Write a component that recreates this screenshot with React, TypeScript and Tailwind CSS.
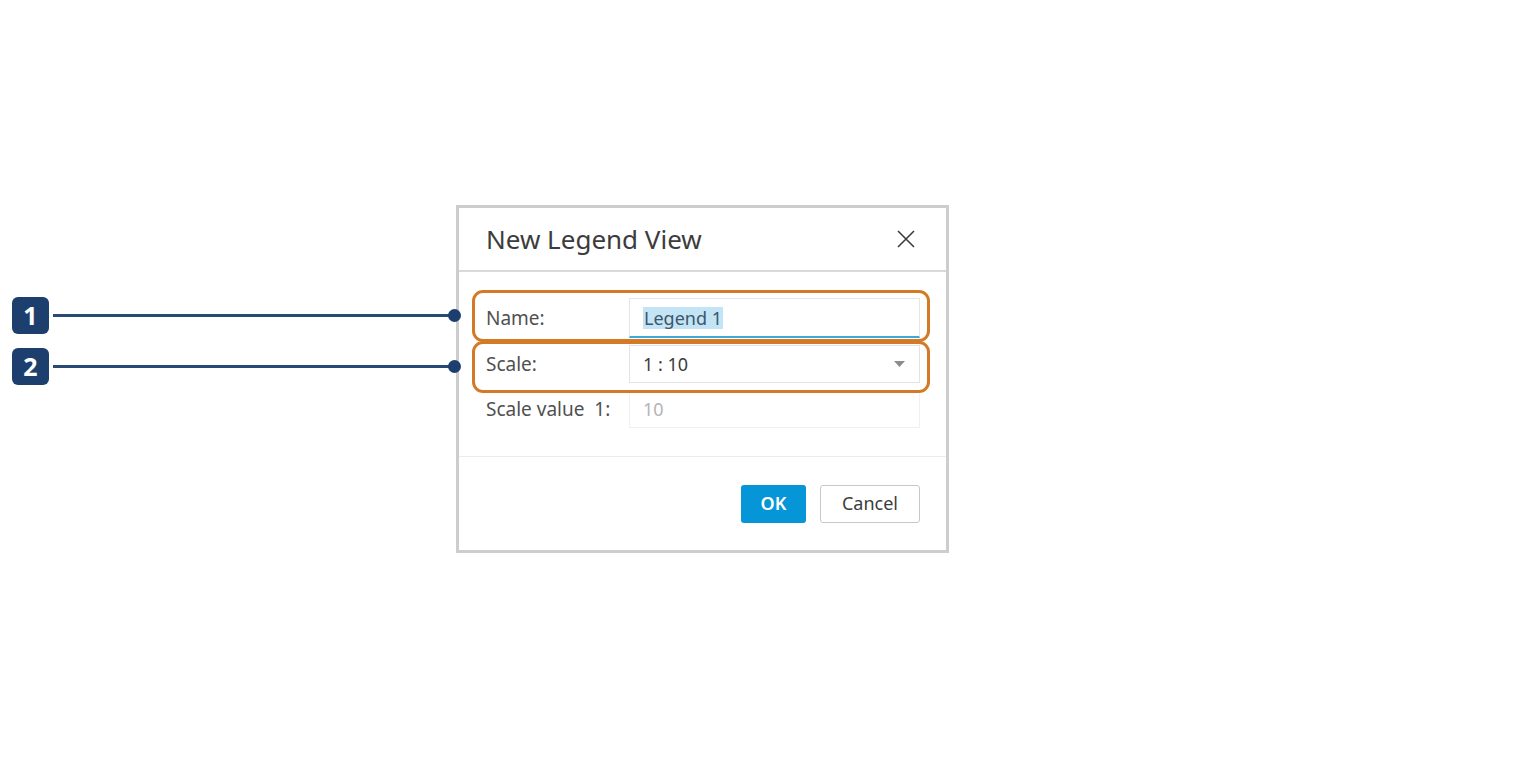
import React from 'react'

const font = { fontFamily: '"Noto Sans", "Open Sans", sans-serif' }

function Callout({ n, top }: { n: string; top: number }) {
  // badge + leader line + end dot, pinned at the row it points to
  return (
    <div className="absolute left-[12px] flex items-center" style={{ top }}>
      <div className="flex h-[37px] w-[37px] items-center justify-center rounded-[6px] bg-[#1d3f6d] text-[25px] font-bold leading-none text-white">
        {n}
      </div>
      <div className="ml-[4px] h-[3px] w-[396px] bg-[#2a4a76]" />
      <div className="-ml-[1px] h-[13px] w-[13px] rounded-full bg-[#1d3f6d]" />
    </div>
  )
}

function Row({ label, children }: { label: string; children: React.ReactNode }) {
  return (
    <div className="flex items-center">
      <div className="w-[143px] whitespace-pre text-[19px] text-[#505050]">{label}</div>
      {children}
    </div>
  )
}

export default function App() {
  return (
    <div className="relative h-[758px] w-[1520px] overflow-hidden bg-white" style={font}>
      <div className="pl-[456px] pt-[205px]">
        <div className="flex h-[348px] w-[493px] flex-col border-[3px] border-[#cdcdcd] bg-white">
          {/* header */}
          <div className="flex h-[64px] shrink-0 items-center justify-between border-b-2 border-[#d9d9d9] pl-[27px] pr-[31px]">
            <span className="text-[26px] text-[#3c3c3c]">New Legend View</span>
            <svg width="18" height="18" viewBox="0 0 18 18" className="text-[#3c3c3c]">
              <path d="M1 1L17 17M17 1L1 17" stroke="currentColor" strokeWidth="1.6" />
            </svg>
          </div>

          {/* fields */}
          <div className="flex flex-col gap-[7px] border-b border-[#ebebeb] pb-[28px] pl-[27px] pr-[26px] pt-[26px]">
            <Row label="Name:">
              <div className="flex h-[40px] w-[291px] items-center border border-b-2 border-[#e6e6e6] border-b-[#3aa9dc] pl-[13px]">
                <span className="bg-[#c3e4f5] px-[1px] text-[18px] leading-[22px] text-[#3d566a]">Legend 1</span>
              </div>
            </Row>
            <Row label="Scale:">
              <div className="flex h-[38px] w-[291px] items-center justify-between border border-[#e3e3e3] pl-[13px] pr-[14px]">
                <span className="text-[18px] text-[#3c3c3c]">1 : 10</span>
                <svg width="11" height="6" viewBox="0 0 11 6">
                  <path d="M0 0H11L5.5 6Z" fill="#8c8c8c" />
                </svg>
              </div>
            </Row>
            <Row label="Scale value  1:">
              <div className="flex h-[38px] w-[291px] items-center border border-[#f0f0f0] pl-[13px]">
                <span className="text-[18px] text-[#b4b4b4]">10</span>
              </div>
            </Row>
          </div>

          {/* footer */}
          <div className="flex flex-1 items-center justify-end gap-[14px] pr-[26px]">
            <button className="h-[38px] w-[65px] rounded-[3px] bg-[#0696d7] text-[18px] font-semibold text-white">OK</button>
            <button className="h-[38px] w-[100px] rounded-[3px] border border-[#c8c8c8] bg-white text-[18px] text-[#3c3c3c]">
              Cancel
            </button>
          </div>
        </div>
      </div>

      {/* highlight frames around the first two rows */}
      <div className="absolute left-[472px] top-[290px] h-[52px] w-[458px] rounded-[11px] border-[3px] border-[#d47a27]" />
      <div className="absolute left-[472px] top-[341px] h-[52px] w-[458px] rounded-[11px] border-[3px] border-[#d47a27]" />

      <Callout n="1" top={297} />
      <Callout n="2" top={348} />
    </div>
  )
}
